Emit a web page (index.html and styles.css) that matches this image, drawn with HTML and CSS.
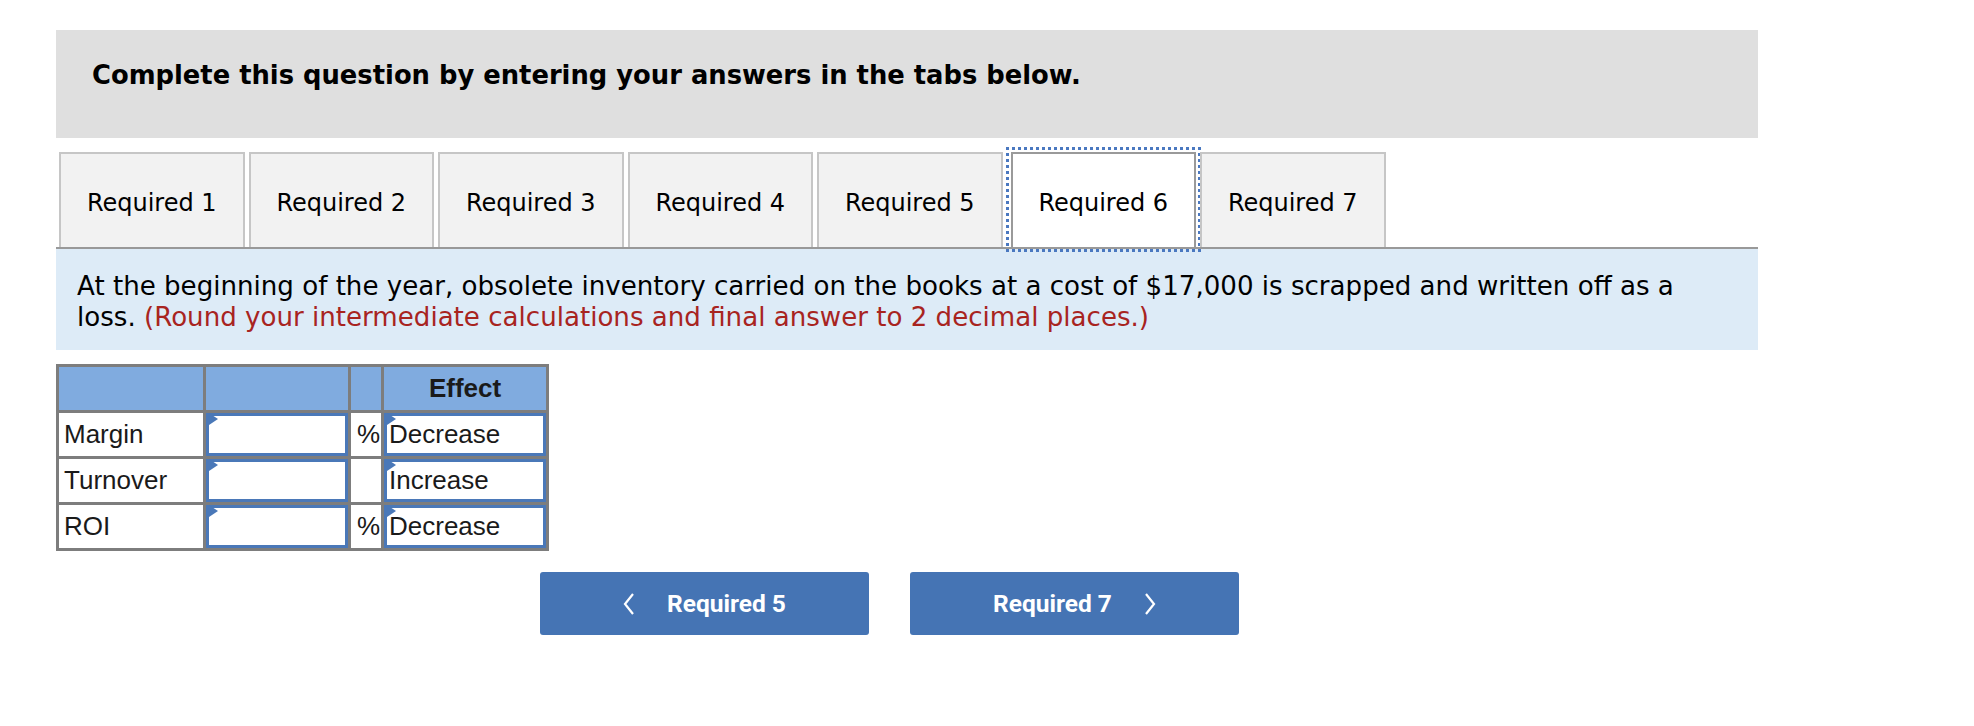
FILE: index.html
```html
<!DOCTYPE html>
<html>
<head>
<meta charset="utf-8">
<link rel="stylesheet" href="styles.css">
</head>
<body>
<div class="wrap">
  <div class="header">Complete this question by entering your answers in the tabs below.</div>
  <div class="tabs">
    <div class="tab">Required 1</div>
    <div class="tab">Required 2</div>
    <div class="tab">Required 3</div>
    <div class="tab">Required 4</div>
    <div class="tab">Required 5</div>
    <div class="tab active">Required 6</div>
    <div class="tab">Required 7</div>
  </div>
  <div class="panel">
    <div class="line">At the beginning of the year, obsolete inventory carried on the books at a cost of $17,000 is scrapped and written off as a</div>
    <div class="line">loss. <span class="red">(Round your intermediate calculations and final answer to 2 decimal places.)</span></div>
  </div>
  <table class="grid">
    <tr class="head">
      <th class="c1"></th><th class="c2"></th><th class="c3"></th><th class="c4">Effect</th>
    </tr>
    <tr>
      <td class="label">Margin</td>
      <td class="in"><div class="box"><span class="flag"></span></div></td>
      <td class="pct">%</td>
      <td class="in"><div class="box"><span class="flag"></span>Decrease</div></td>
    </tr>
    <tr>
      <td class="label">Turnover</td>
      <td class="in"><div class="box"><span class="flag"></span></div></td>
      <td class="pct"></td>
      <td class="in"><div class="box"><span class="flag"></span>Increase</div></td>
    </tr>
    <tr>
      <td class="label">ROI</td>
      <td class="in"><div class="box"><span class="flag"></span></div></td>
      <td class="pct">%</td>
      <td class="in"><div class="box"><span class="flag"></span>Decrease</div></td>
    </tr>
  </table>
  <div class="nav">
    <div class="btn prev">
      <svg class="chev" width="12" height="24" viewBox="0 0 12 24"><polyline points="10,2 2,12 10,22" fill="none" stroke="#fff" stroke-width="2.2"/></svg>
      <span>Required 5</span>
    </div>
    <div class="btn next">
      <span>Required 7</span>
      <svg class="chev" width="12" height="24" viewBox="0 0 12 24"><polyline points="2,2 10,12 2,22" fill="none" stroke="#fff" stroke-width="2.2"/></svg>
    </div>
  </div>
</div>
</body>
</html>
```
FILE: styles.css
```css
html, body {
  margin: 0;
  padding: 0;
  background: #fff;
}
body {
  font-family: "DejaVu Sans", Verdana, sans-serif;
  color: #000;
}
.wrap {
  padding: 30px 0 0 56px;
  width: 1702px;
}
.header {
  background: #dfdfdf;
  height: 108px;
  box-sizing: border-box;
  padding: 29px 0 0 36px;
  font-weight: bold;
  font-size: 25.8px;
  line-height: 32px;
}
.tabs {
  display: flex;
  gap: 4px;
  margin-top: 14px;
  padding-left: 3px;
  border-bottom: 2px solid #999;
  height: 95px;
}
.tab {
  width: 185.5px;
  box-sizing: border-box;
  border: 2px solid #c6c6c6;
  border-bottom: none;
  background: #f2f2f2;
  display: flex;
  align-items: center;
  justify-content: center;
  padding-top: 5px;
  font-size: 24px;
}
.tab.active {
  background: #fff;
  border-color: #9a9a9a;
  outline: 3px dotted #4a78c0;
  outline-offset: 2px;
  margin-left: 4px;
}
.panel {
  background: #ddebf7;
  padding: 22px 21px 17px 21px;
  font-size: 26.1px;
  line-height: 31px;
}
.line {
  white-space: nowrap;
}
.red {
  color: #a8241f;
}
.grid {
  margin-top: 14px;
  border-collapse: collapse;
  font-family: "Liberation Sans", Arial, sans-serif;
  font-size: 26px;
  color: #1a1a1a;
}
.grid th, .grid td {
  border: 3px solid #7d7d7d;
  padding: 0;
  height: 43px;
}
.head th {
  background: #80abdf;
  font-weight: bold;
}
.c1 { width: 144px; }
.c2 { width: 142px; }
.c3 { width: 30px; }
.c4 { width: 162px; }
.label {
  padding-left: 5px !important;
  text-align: left;
}
.pct {
  text-align: right;
  padding-right: 1px !important;
}
.in {
  padding: 0;
}
.box {
  position: relative;
  height: 43px;
  box-sizing: border-box;
  border: 3px solid #4a78b8;
  background: #fff;
  padding-left: 2px;
  line-height: 37px;
}
.flag {
  position: absolute;
  left: 0;
  top: -3px;
  width: 0;
  height: 0;
  border-top: 6px solid transparent;
  border-bottom: 6px solid transparent;
  border-left: 9px solid #4a78b8;
}
.nav {
  display: flex;
  gap: 41px;
  margin-top: 21px;
  padding-left: 484px;
}
.btn {
  width: 329px;
  height: 63px;
  background: #4574b4;
  border-radius: 3px;
  color: #fff;
  font-family: Roboto, "Liberation Sans", sans-serif;
  font-weight: bold;
  font-size: 24.5px;
  display: flex;
  align-items: center;
  justify-content: center;
  gap: 32px;
}
```
